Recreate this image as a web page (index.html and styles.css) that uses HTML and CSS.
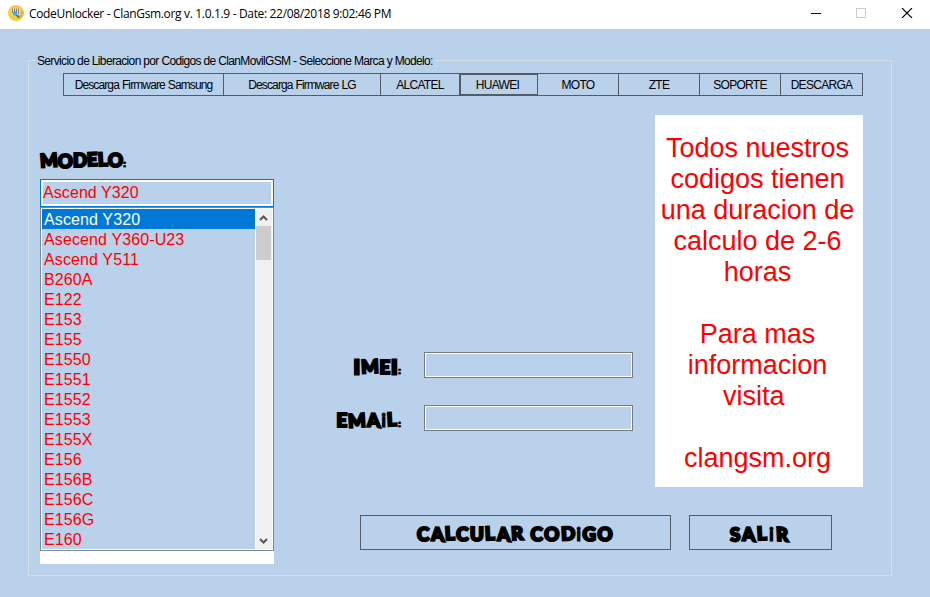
FILE: index.html
```html
<!DOCTYPE html>
<html lang="es">
<head>
<meta charset="utf-8">
<title>CodeUnlocker</title>
<link rel="stylesheet" href="styles.css">
</head>
<body>
<header class="titlebar">
  <svg class="logo" width="16" height="16" viewBox="0 0 16 16"><circle cx="8" cy="8" r="8" fill="#fbcd35"/><path d="M9 13l4-8 2.500 2c0 4-3 7-6 7z" fill="#e5b52a"/><path d="M3.500 3.500h9v6.500h-9z" fill="#dcdce2"/><path d="M4.500 3.500v4.500M6.500 3.500v4M8.500 3.500v4.500M10.500 3.500v5.500" stroke="#77707a" stroke-width=".9"/><circle cx="7" cy="8.500" r="1.700" fill="#48b8f0" stroke="#268bc4" stroke-width=".7"/><path d="M8.500 10l2.500 2.500" stroke="#176ab0" stroke-width="1.600"/></svg>
  <span class="title">CodeUnlocker - ClanGsm.org v. 1.0.1.9 - Date: 22/08/2018 9:02:46 PM</span>
  <svg class="controls" width="102" height="10" viewBox="0 0 102 10" shape-rendering="crispEdges" fill="none"><path d="M0 5.500h10" stroke="#000"/><path d="M45.500.5h9v9h-9z" stroke="#ccc"/><path d="M91 0l10 10M101 0l-10 10" stroke="#000" shape-rendering="auto" stroke-width="1.100"/></svg>
</header>
<main class="group">
  <div class="legend"><span class="legend-text">Servicio de Liberacion por Codigos de ClanMovilGSM - Seleccione Marca y Modelo:</span></div>
  <nav class="tabs">
    <span class="tab firmware">Descarga Firmware Samsung</span><span class="tab firmware">Descarga Firmware LG</span><span class="tab">ALCATEL</span><span class="tab active">HUAWEI</span><span class="tab">MOTO</span><span class="tab">ZTE</span><span class="tab">SOPORTE</span><span class="tab">DESCARGA</span>
  </nav>
  <div class="content">
    <section class="models">
      <div class="funky model-label"><b class="l">M</b><b class="d">O</b><b>D</b><b class="u">E</b><b class="u">L</b><b>O</b><i>:</i></div>
      <div class="combo">Ascend Y320</div>
      <div class="list">
        <ul class="items">
          <li class="selected">Ascend Y320</li><li>Asecend Y360-U23</li><li>Ascend Y511</li><li>B260A</li><li>E122</li><li>E153</li><li>E155</li><li>E1550</li><li>E1551</li><li>E1552</li><li>E1553</li><li>E155X</li><li>E156</li><li>E156B</li><li>E156C</li><li>E156G</li><li>E160</li>
        </ul>
        <div class="scrollbar">
          <svg class="arrow" width="15" height="17" viewBox="0 0 15 17"><path d="M4 11l3.500-3.500L11 11" fill="none" stroke="#555" stroke-width="2"/></svg>
          <div class="thumb"></div>
          <svg class="arrow end" width="15" height="17" viewBox="0 0 15 17"><path d="M4 7l3.500 3.500L11 7" fill="none" stroke="#555" stroke-width="2"/></svg>
        </div>
      </div>
      <div class="list-tail"></div>
    </section>
    <section class="work">
      <div class="upper">
        <form class="fields">
          <div class="field"><label class="funky imei"><b class="w">I</b><b class="u">M</b><b>E</b><b class="w">I</b><i>:</i></label><input class="entry"></div>
          <div class="field"><label class="funky email"><b>E</b><b class="l">M</b><b class="r">A</b><b class="i">i</b><b class="u">L</b><i>:</i></label><input class="entry"></div>
        </form>
        <aside class="notice">Todos nuestros<br>codigos tienen<br>una duracion de<br>calculo de 2-6<br>horas<br><br>Para mas<br>informacion<br>visita&nbsp;<br><br>clangsm.org</aside>
      </div>
      <div class="actions">
        <button class="button calculate"><span class="funky calc-text"><b>C</b><b class="r">A</b><b class="u">L</b><b>C</b><b>U</b><b class="u">L</b><b class="r">A</b><b class="u">R</b> <b>C</b><b>O</b><b class="u">D</b><b class="i">i</b><b>G</b><b>O</b></span></button>
        <button class="button exit"><span class="funky exit-text"><b class="l">S</b><b class="r">A</b><b class="u">L</b><b class="i">i</b><b class="r">R</b></span></button>
      </div>
    </section>
  </div>
</main>
</body>
</html>
```
FILE: styles.css
```css
* { box-sizing: border-box; }
body { margin: 0; width: 930px; height: 597px; overflow: hidden; background: #b9d1ea; font-family: "Liberation Sans", sans-serif; color: #000; }
.titlebar { height: 29px; background: #fff; display: flex; align-items: center; padding: 0 17px 3px 8px; }
.logo { margin-right: 5px; }
.title { font: 12px "Open Sans", sans-serif; letter-spacing: -.335px; white-space: nowrap; }
.controls { margin-left: auto; }
.group { margin: 31px 38px 0 28px; height: 516px; border: 1px solid #d5dfe5; }
.legend { height: 13px; padding-left: 6px; margin-top: -8px; line-height: 14px; }
.legend-text { display: inline-block; padding: 0 2px; background: #b9d1ea; font-size: 12px; letter-spacing: -.655px; white-space: nowrap; }
.tabs { width: 800px; height: 23px; margin: 7px 0 0 34px; display: grid; grid-template-columns: 161px 157px 79px 78px 81px 81px 81px 82px; border: solid #555b60; border-width: 1px 0 1px 0; }
.tab { border-right: 1px solid #555b60; display: flex; align-items: center; justify-content: center; font-size: 12px; letter-spacing: -.7px; white-space: nowrap; }
.tab:first-child { border-left: 1px solid #555b60; }
.firmware { font-size: 12px; letter-spacing: -.88px; word-spacing: .5px; }
.active { border: 1px solid #555b60; padding-right: 3px; }
.content { display: flex; padding-left: 11px; }
.models { width: 234px; padding-top: 53px; }
.funky { font: 900 18.5px/22px Lato, sans-serif; white-space: nowrap; -webkit-text-stroke: 2.2px #000; display: block; }
.funky b { display: inline-block; font-weight: 900; }
.funky i { font-size: 10px; font-style: normal; -webkit-text-stroke-width: 1.2px; }
.funky .i { -webkit-text-stroke-width: .8px; }
.funky .w { -webkit-text-stroke-width: 3px; }
.l { transform: rotate(-4deg); }
.r { transform: rotate(5deg) skewX(8deg); }
.u { transform: translateY(-1px) rotate(-3deg); }
.d { transform: translateY(1px); }
.model-label { height: 30px; letter-spacing: .2px; }
.combo { height: 28px; border: 1px solid #0078d7; box-shadow: inset 0 0 0 2px #fff; color: #f00; font-size: 16px; letter-spacing: .08px; line-height: 25px; padding-left: 2px; }
.list { height: 344px; border: 1px solid #7b8794; padding: 1px; background: #fff; display: flex; }
.items { width: 213px; height: 340px; margin: 0 1px 0 0; padding: 0; background: #b9d1ea; list-style: none; color: #f00; font-size: 16px; letter-spacing: .12px; line-height: 22px; }
.items li { height: 20px; padding-left: 2px; }
.items .selected { background: #0078d7; color: #fff; }
.scrollbar { width: 16px; background: #f0f0f0; display: flex; flex-direction: column; }
.thumb { width: 15px; height: 34px; background: #cdcdcd; }
.end { margin-top: auto; }
.list-tail { height: 13px; background: #fff; }
.work { flex: 1; }
.upper { height: 391px; padding-top: 19px; display: flex; }
.fields { width: 359px; margin-right: 22px; padding-top: 237px; display: flex; flex-direction: column; gap: 27px; }
.field { display: flex; justify-content: flex-end; height: 26px; }
.imei, .email { padding-top: 4px; margin-right: 22px; letter-spacing: 1.2px; }
.entry { width: 209px; height: 26px; border: 1px solid #7a7a7a; box-shadow: inset 0 0 0 1px #fff; background: transparent; padding: 2px; outline: 0; }
.notice { width: 208px; height: 372px; background: #fff; color: #f00; font-size: 27px; line-height: 31px; text-align: center; padding: 18px 3px 0 0; margin: 0; white-space: nowrap; }
.actions { display: flex; gap: 18px; padding: 28px 0 0 86px; }
.button { height: 35px; border: 1px solid #555b60; background: transparent; color: #000; padding: 2px 0 0; display: flex; justify-content: center; align-items: center; }
.calculate { width: 311px; }
.exit { width: 143px; }
.calc-text { letter-spacing: 1.5px; }
.exit-text { letter-spacing: 2px; padding-right: 1px; }
```
